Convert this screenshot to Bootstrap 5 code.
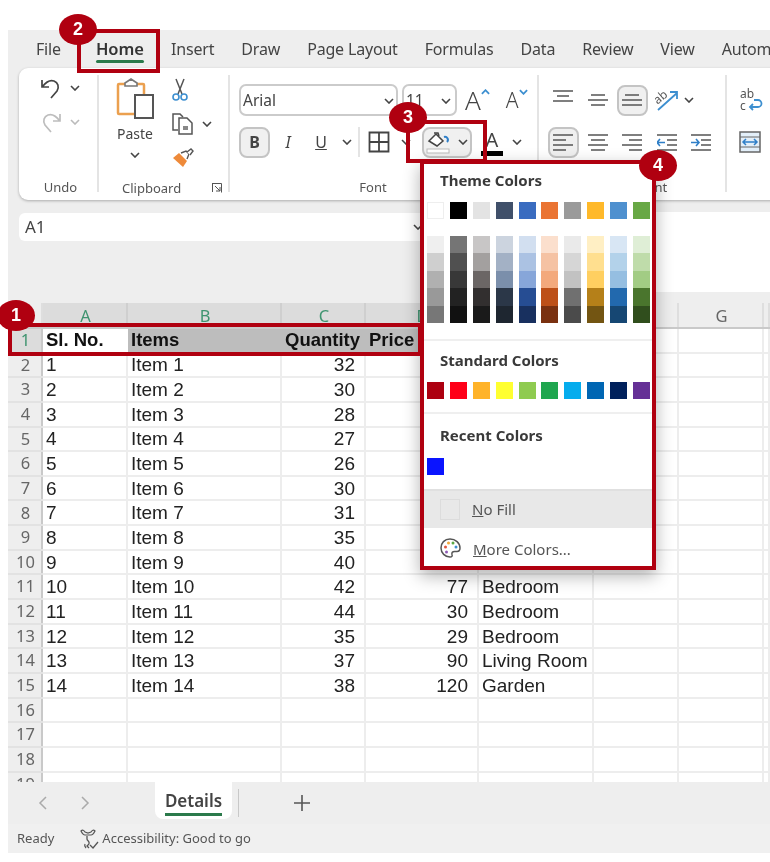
<!DOCTYPE html>
<html lang="en">
<head>
<meta charset="utf-8">
<title>Excel fill colour</title>
<link href="https://cdn.jsdelivr.net/npm/bootstrap@5.3.0/dist/css/bootstrap.min.css" rel="stylesheet">
<style>
html,body{margin:0;background:#fff;width:770px;height:862px;overflow:hidden}
.stage{position:relative;width:770px;height:862px;overflow:hidden;font-family:"Noto Sans","Open Sans",sans-serif;filter:blur(.45px)}
.app{margin:30px 0 0 8px;width:762px;height:823px;background:#eeeeee;overflow:hidden}
svg{display:block;flex:none}
.tabsbar{height:38px;padding-left:28px;gap:27px;font-size:16px;letter-spacing:-.18px;color:#444;flex:none}
.tabsbar>span{white-space:nowrap;line-height:38px;height:38px}
.tabsbar>.tab-on{position:relative;font-weight:600;font-size:16.5px;letter-spacing:0;color:#333;margin-left:8px}
.tab-on::after{content:"";position:absolute;left:0;right:0;bottom:5px;height:3px;background:#2b7a4b;border-radius:2px}
.ribbon{height:132px;margin-left:11px;width:790px;background:#fff;border-radius:9px;box-shadow:0 1px 3px rgba(0,0,0,.28);flex:none}
.rgroup{position:relative;flex:none;display:flex;flex-direction:column}
.rgroup+.rgroup::before{content:"";position:absolute;left:0;top:7px;bottom:8px;width:2px;background:#e4e4e4}
.rlabel{margin-top:auto;height:26px;line-height:26px;font-size:13px;color:#555;text-align:center;white-space:nowrap}
.g-undo{width:78px;padding-top:3px;padding-left:21px}
.g-clip{width:131px}
.g-font{width:309px;padding:16px 0 0 11px}
.g-align{width:188px;padding-left:9px;padding-top:16px}
.g-wrap{width:80px;padding:16px 0 0 14px}
.cell34{height:34px}
.frow{height:32px;margin-bottom:10px}
.sel-box{height:32px;background:#fff;border:2px solid #cbcbcb;border-radius:7px;font-size:15.500px;color:#444;padding:1px 2px 0 2px}
.sel-font{width:159px;margin-right:4px}
.sel-size{width:55px;padding-right:4px}
.ico-box{display:flex;align-items:center;justify-content:center;flex:none;height:32px}
.on-btn{background:#f0f0f0;border:2px solid #c4c4c4;border-radius:8px}
.paste-col{width:68px;padding-top:9px;padding-left:8px;font-size:14px;color:#444}
.tools-col{padding-left:7px;padding-top:5px}
.bigA{font-family:"Noto Sans",sans-serif;color:#444;line-height:1}
.fbox{height:103px;padding-top:12px;flex:none}
.namebox{margin:1px 0 0 11px;width:410px;height:28px;background:#fff;border-radius:6px;font-size:17px;color:#444;padding:0 6px;flex:none}
.namebar-r{margin-left:20px;flex:1;height:80px;background:#fff;border-radius:6px 0 0 6px}
.gridwrap{height:479px;overflow:hidden;background:#fff;flex:none}
.xl{table-layout:fixed;width:762px;border-collapse:collapse;font-family:"Liberation Sans",Arial,sans-serif;font-size:19px;color:#222}
.xl tr{height:24.650px}
.xl tr.hd{height:25px}
.xl td{padding:0 9px 0 3px;border-right:2px solid #ededed;border-bottom:2px solid #ededed;line-height:1;white-space:nowrap;overflow:hidden}
.xl th{font-family:"Noto Sans",sans-serif;font-weight:400;font-size:16.500px;color:#666;text-align:center;background:#eeeeee;border-right:2px solid #c9c9c9;border-bottom:2px solid #e2e2e2;padding:0 0 0 2px;line-height:1;overflow:hidden}
.xl .hd th{border-right:2px solid #dedede;border-bottom:2px solid #c9c9c9;padding-top:2px}
.xl .hd th.act,.xl th.act{background:#dcdcdc;color:#3f9470}
.xl .hd th.act{border-right-color:#cfcfcf}
.xl td.num{text-align:right}
.xl tr.r1 td{font-weight:700;font-size:18.500px;background:#bdbdbd;color:#111;border-bottom:2px solid #2b7a4b;border-right-color:#bdbdbd}
.xl tr.r1 td.cur{background:#fff;border-left:2px solid #2b7a4b;border-right-color:#fff}
.xl tr.r1 td.plain{background:#fff;font-weight:400;border-bottom-color:#ededed;border-right-color:#ededed}
.c0{width:34px}.c1{width:85px}.c2{width:154px}.c3{width:84px}.c4{width:113px}.c5{width:115px}.c6{width:85px}.c7{width:85px}
.sheetbar{height:42px;flex:none;color:#8a8a8a}
.nav-arrows{gap:34px;padding-left:30px}
.sheettab{position:relative;width:77px;height:37px;margin-left:65px;background:#fff;border-radius:0 0 8px 8px;font-weight:600;font-size:17px;color:#444;text-align:center;line-height:37px}
.sheettab::after{content:"";position:absolute;left:10px;right:10px;bottom:3px;height:3px;background:#2b7a4b}
.vsep{width:1px;height:28px;background:#c8c8c8;margin-left:6px}
.plus-add{margin-left:55px}
.statusbar{height:29px;flex:none;background:#f0f0f0;font-size:13px;color:#555;padding-left:9px}
.a11y{margin-left:25px;margin-right:3px}
.w31{width:31px;height:31px}.w36{width:36px}.w30{width:30px}.w22{width:22px}.w22b{width:22px;margin-left:8px}.w32{width:32px}.w50{width:50px;height:31px}.w40{width:40px}.w345{width:34.500px}
.al-mid,.al-l{margin:0 1.750px}
.sep2{display:block;width:2px;height:30px;background:#e4e4e4}
.fcolor{padding-top:2px}
.fc-bar{display:block;width:22px;height:5px;background:#000;margin-top:1px}
.fontlbl{padding-right:30px}
.cliplbl{padding-left:25px}
.clip-launch{margin-left:31px}
.cap-a{font-size:26px;font-weight:300}
.cap-b{font-size:21px;font-weight:300}
/* callouts */
.redbox{position:absolute;border:4px solid #b00010;pointer-events:none}
.rb-home{left:77px;top:29px;width:83px;height:44px}
.rb-row{left:8px;top:323px;width:414px;height:33px}
.rb-fill{left:406px;top:120px;width:81px;height:43px}
.pin{position:absolute;width:38px;height:31px;border-radius:50%;background:#b00010;color:#fff;font:700 18px/31px "Liberation Sans",Arial,sans-serif;text-align:center}
.pin1{left:-3px;top:300px}
.pin2{left:59px;top:14px}
.pin3{left:389px;top:102px}
.pin4{left:639px;top:150px}
.menu-pop{position:absolute;left:420px;top:160px;width:236px;height:410px;background:#fff;border:4px solid #b00010;box-shadow:0 6px 16px rgba(0,0,0,.3);font-size:14px;color:#444;display:flex;flex-direction:column}
.pop-title{font-weight:700;font-size:15px;color:#3a3a3a;padding-left:16px;line-height:20px;white-space:nowrap}
.swrow{display:flex;gap:5.900px;padding-left:3px}
.swrow>i{display:block;width:17px;height:17px;flex:none}
.shades>span{display:block;width:17px;flex:none}
.shades i{display:block;height:17.400px}
.pop-sep{height:2px;background:#efefef;flex:none}
.pop-item{padding-left:16px;font-size:15px;color:#555;gap:12px;flex:none}
.nofill{height:39px;background:#e8e8e8;border-top:2px solid #e0e0e0}
.nf-box{width:20px;height:21px;border:1px solid #dcdcdc;flex:none}
.more{height:38px;padding-top:4px}
.mt-t1{margin-top:6px}
.mt-s1{margin-top:12px}
.mt-s2{margin-top:17px}
.mt-s3{margin-top:16px}
.mt-t2{margin-top:9px}
.mt-s4{margin-top:12px}
.mt-s5{margin-top:13px}
.mt-t3{margin-top:11px}
.mt-s6{margin-top:13px}
.mt-s7{margin-top:14px}
</style>
</head>
<body>
<svg width="0" height="0" class="position-absolute">
  <symbol id="chev" viewBox="0 0 10 6"><path d="M1 1l4 4 4-4" fill="none" stroke="#444" stroke-width="1.600"/></symbol>
  <symbol id="chevl" viewBox="0 0 10 6"><path d="M1 1l4 4 4-4" fill="none" stroke="#bbb" stroke-width="1.600"/></symbol>
</svg>
<div class="stage">
<div class="app d-flex flex-column">

  <div class="tabsbar d-flex">
    <span>File</span><span class="tab-on">Home</span><span>Insert</span><span>Draw</span><span>Page Layout</span><span>Formulas</span><span>Data</span><span>Review</span><span>View</span><span>Automate</span>
  </div>

  <div class="ribbon d-flex">
    <div class="rgroup g-undo">
      <div class="d-flex align-items-center cell34">
        <svg width="22" height="24" viewBox="0 0 22 24"><path d="M2 4v7h7M2.500 10.500C6 6 10 3.500 14 5c4 1.500 5.500 6 3 10l-6 7" fill="none" stroke="#444" stroke-width="1.700"/></svg>
        <svg class="ms-2" width="10" height="6"><use href="#chev"/></svg>
      </div>
      <div class="d-flex align-items-center cell34">
        <svg width="22" height="24" viewBox="0 0 22 24"><path d="M20 4v7h-7M19.500 10.500C16 6 12 3.500 8 5c-4 1.500-5.500 6-3 10l6 7" fill="none" stroke="#bdbdbd" stroke-width="1.700"/></svg>
        <svg class="ms-2" width="10" height="6"><use href="#chevl"/></svg>
      </div>
      <div class="rlabel pe-3">Undo</div>
    </div>

    <div class="rgroup g-clip">
      <div class="d-flex">
        <div class="paste-col d-flex flex-column align-items-center">
          <svg width="38" height="42" viewBox="0 0 38 42"><path d="M3 7h24a1 1 0 0 1 1 1v28a1 1 0 0 1-1 1H3a1 1 0 0 1-1-1V8a1 1 0 0 1 1-1z" fill="#fff" stroke="#eba04f" stroke-width="2.500"/><path d="M9 9V6l6-4 6 4v3z" fill="#fff" stroke="#777" stroke-width="1.600"/><rect x="19" y="18" width="18" height="23" fill="#fff" stroke="#555" stroke-width="2"/></svg>
          <div class="mt-1">Paste</div>
          <svg class="mt-2" width="10" height="6"><use href="#chev"/></svg>
        </div>
        <div class="tools-col">
          <div class="d-flex align-items-center cell34">
            <svg width="16" height="24" viewBox="0 0 16 24"><path d="M4 1l6 15M12 1L6 16" stroke="#555" stroke-width="1.500" fill="none"/><circle cx="4" cy="19" r="3" fill="none" stroke="#3d8fd0" stroke-width="1.600"/><circle cx="12" cy="19" r="3" fill="none" stroke="#3d8fd0" stroke-width="1.600"/></svg>
          </div>
          <div class="d-flex align-items-center cell34">
            <svg width="22" height="22" viewBox="0 0 22 22"><path d="M6 17H1V1h7l3 3" fill="#fff" stroke="#555" stroke-width="1.500"/><path d="M7 5h8l5 5v11H7z" fill="#fff" stroke="#555" stroke-width="1.500"/><path d="M11 13h5v4h-5z" fill="#888"/></svg>
            <svg class="ms-2" width="10" height="6"><use href="#chev"/></svg>
          </div>
          <div class="d-flex align-items-center cell34">
            <svg width="22" height="20" viewBox="0 0 22 20"><path d="M1 10l6-5 8 8-4 6z" fill="#ee8a3a"/><path d="M9 5l5-2 3 3-2 5" fill="#fff" stroke="#555" stroke-width="1.400"/><path d="M15 4l4-3 2 2-3 4" fill="#fff" stroke="#555" stroke-width="1.400"/></svg>
          </div>
        </div>
      </div>
      <div class="rlabel d-flex align-items-center cliplbl"><span>Clipboard</span>
        <svg class="clip-launch" width="10" height="10" viewBox="0 0 10 10"><path d="M0 .5h9.500V9.500M.5 0v9M3 3l5 5M8 4v4H4" fill="none" stroke="#555"/></svg></div>
    </div>

    <div class="rgroup g-font">
      <div class="d-flex align-items-center frow">
        <div class="sel-box sel-font d-flex align-items-center justify-content-between"><span>Arial</span><svg width="10" height="6"><use href="#chev"/></svg></div>
        <div class="sel-box sel-size d-flex align-items-center justify-content-between"><span>11</span><svg width="10" height="6"><use href="#chev"/></svg></div>
        <div class="ico-box bigA cap-a ms-2">A<svg class="mb-3" width="9" height="6" viewBox="0 0 10 6"><path d="M1 5l4-4 4 4" fill="none" stroke="#3d8fd0" stroke-width="2"/></svg></div>
        <div class="ico-box bigA cap-b ms-3">A<svg class="mb-3" width="9" height="6" viewBox="0 0 10 6"><path d="M1 1l4 4 4-4" fill="none" stroke="#3d8fd0" stroke-width="2"/></svg></div>
      </div>
      <div class="d-flex align-items-center frow">
        <div class="ico-box on-btn fw-bold bigA w31">B</div>
        <div class="ico-box bigA fst-italic w36">I</div>
        <div class="ico-box bigA w30 text-decoration-underline">U</div>
        <div class="ico-box w22"><svg width="10" height="6"><use href="#chev"/></svg></div>
        <span class="sep2"></span>
        <div class="ico-box w22b"><svg width="22" height="22" viewBox="0 0 22 22"><path d="M1.500 1.500h19v19h-19zM11 1.500v19M1.500 11h19" fill="none" stroke="#444" stroke-width="1.800"/></svg></div>
        <div class="ico-box w32"><svg width="10" height="6"><use href="#chev"/></svg></div>
        <div class="ico-box on-btn w50 gap-2">
          <svg width="24" height="24" viewBox="0 0 24 24"><path d="M3 11l7-7 7 7-6 5z" fill="#fff" stroke="#444" stroke-width="1.500"/><path d="M8 3h4l1 3" fill="none" stroke="#444" stroke-width="1.500"/><path d="M18 7a3 3 0 0 1 3 5" fill="none" stroke="#2f7fc8" stroke-width="2"/><rect x="1" y="19" width="22" height="4" fill="#fff" stroke="#bbb"/></svg>
          <svg width="10" height="6"><use href="#chev"/></svg>
        </div>
        <div class="ico-box bigA w40 flex-column fs-5 fcolor">A<span class="fc-bar"></span></div>
        <div class="ico-box"><svg width="10" height="6"><use href="#chev"/></svg></div>
      </div>
      <div class="rlabel fontlbl">Font</div>
    </div>

    <div class="rgroup g-align">
      <div class="d-flex align-items-center frow">
        <div class="ico-box w345 pb-2"><svg width="20" height="12" viewBox="0 0 20 12"><path d="M0 1h20M4 6h12M0 11h20" stroke="#555" stroke-width="1.600"/></svg></div>
        <div class="ico-box w345"><svg width="20" height="12" viewBox="0 0 20 12"><path d="M3 1h14M0 6h20M3 11h14" stroke="#555" stroke-width="1.600"/></svg></div>
        <div class="ico-box on-btn w31 al-mid"><svg width="20" height="12" viewBox="0 0 20 12"><path d="M3 1h14M0 6h20M0 11h20" stroke="#555" stroke-width="1.600"/></svg></div>
        <div class="ico-box w345"><svg width="24" height="24" viewBox="0 0 24 24"><path d="M3 22L22 5M15 4h7v7" fill="none" stroke="#3d8fd0" stroke-width="1.800"/><text x="-1" y="13" font-size="12" fill="#555" transform="rotate(-40 6 10)">ab</text></svg></div>
        <div class="ico-box"><svg width="10" height="6"><use href="#chev"/></svg></div>
      </div>
      <div class="d-flex align-items-center frow">
        <div class="ico-box on-btn w31 al-l"><svg width="20" height="17" viewBox="0 0 20 17"><path d="M0 1h20M0 6h13M0 11h20M0 16h13" stroke="#555" stroke-width="1.600"/></svg></div>
        <div class="ico-box w345"><svg width="20" height="17" viewBox="0 0 20 17"><path d="M0 1h20M3 6h14M0 11h20M3 16h14" stroke="#555" stroke-width="1.600"/></svg></div>
        <div class="ico-box w345"><svg width="20" height="17" viewBox="0 0 20 17"><path d="M0 1h20M7 6h13M0 11h20M7 16h13" stroke="#555" stroke-width="1.600"/></svg></div>
        <div class="ico-box w345"><svg width="20" height="17" viewBox="0 0 20 17"><path d="M0 1h20M10 6h10M10 11h10M0 16h20" stroke="#555" stroke-width="1.600"/><path d="M0 8.500h8M3 5l-3 3.500 3 3.500" fill="none" stroke="#2f7fc8" stroke-width="1.600"/></svg></div>
        <div class="ico-box w345"><svg width="20" height="17" viewBox="0 0 20 17"><path d="M0 1h20M10 6h10M10 11h10M0 16h20" stroke="#555" stroke-width="1.600"/><path d="M0 8.500h8M5 5l3 3.500-3 3.500" fill="none" stroke="#2f7fc8" stroke-width="1.600"/></svg></div>
      </div>
      <div class="rlabel">Alignment</div>
    </div>

    <div class="rgroup g-wrap">
      <div class="frow d-flex align-items-center">
        <svg width="24" height="24" viewBox="0 0 24 24"><text x="1" y="10" font-size="12" fill="#555" font-family="Noto Sans">ab</text><text x="1" y="22" font-size="12" fill="#555" font-family="Noto Sans">c</text><path d="M15 12h4a3 3 0 0 1 0 7h-8M14 16l-3 3 3 3" fill="none" stroke="#3d8fd0" stroke-width="1.800"/></svg>
      </div>
      <div class="frow d-flex align-items-center">
        <svg width="22" height="22" viewBox="0 0 22 22"><rect x="1" y="1" width="20" height="20" fill="#e3eff9" stroke="#666" stroke-width="1.500"/><path d="M1 6h20M1 16h20" stroke="#666"/><path d="M4 11h14M7 8l-3 3 3 3M15 8l3 3-3 3" fill="none" stroke="#2f7fc8" stroke-width="1.500"/></svg>
      </div>
    </div>
  </div>

  <div class="fbox d-flex align-items-start">
    <div class="namebox d-flex align-items-center justify-content-between"><span>A1</span><svg width="10" height="6"><use href="#chev"/></svg></div>
    <div class="namebar-r"></div>
  </div>

  <div class="gridwrap">
    <table class="xl">
      <colgroup><col class="c0"><col class="c1"><col class="c2"><col class="c3"><col class="c4"><col class="c5"><col class="c6"><col class="c7"><col></colgroup>
      <tr class="hd"><th></th><th class="act">A</th><th class="act">B</th><th class="act">C</th><th class="act">D</th><th>E</th><th>F</th><th>G</th><th></th></tr>
      <tr class="r1"><th class="act">1</th><td class="cur">Sl. No.</td><td>Items</td><td class="num">Quantity</td><td>Price</td><td></td><td class="plain"></td><td class="plain"></td><td class="plain"></td></tr>
      <tr><th>2</th><td>1</td><td>Item 1</td><td class="num">32</td><td></td><td></td><td></td><td></td><td></td></tr>
      <tr><th>3</th><td>2</td><td>Item 2</td><td class="num">30</td><td></td><td></td><td></td><td></td><td></td></tr>
      <tr><th>4</th><td>3</td><td>Item 3</td><td class="num">28</td><td></td><td></td><td></td><td></td><td></td></tr>
      <tr><th>5</th><td>4</td><td>Item 4</td><td class="num">27</td><td></td><td></td><td></td><td></td><td></td></tr>
      <tr><th>6</th><td>5</td><td>Item 5</td><td class="num">26</td><td></td><td></td><td></td><td></td><td></td></tr>
      <tr><th>7</th><td>6</td><td>Item 6</td><td class="num">30</td><td></td><td></td><td></td><td></td><td></td></tr>
      <tr><th>8</th><td>7</td><td>Item 7</td><td class="num">31</td><td></td><td></td><td></td><td></td><td></td></tr>
      <tr><th>9</th><td>8</td><td>Item 8</td><td class="num">35</td><td></td><td></td><td></td><td></td><td></td></tr>
      <tr><th>10</th><td>9</td><td>Item 9</td><td class="num">40</td><td></td><td></td><td></td><td></td><td></td></tr>
      <tr><th>11</th><td>10</td><td>Item 10</td><td class="num">42</td><td class="num">77</td><td>Bedroom</td><td></td><td></td><td></td></tr>
      <tr><th>12</th><td>11</td><td>Item 11</td><td class="num">44</td><td class="num">30</td><td>Bedroom</td><td></td><td></td><td></td></tr>
      <tr><th>13</th><td>12</td><td>Item 12</td><td class="num">35</td><td class="num">29</td><td>Bedroom</td><td></td><td></td><td></td></tr>
      <tr><th>14</th><td>13</td><td>Item 13</td><td class="num">37</td><td class="num">90</td><td>Living Room</td><td></td><td></td><td></td></tr>
      <tr><th>15</th><td>14</td><td>Item 14</td><td class="num">38</td><td class="num">120</td><td>Garden</td><td></td><td></td><td></td></tr>
      <tr><th>16</th><td></td><td></td><td></td><td></td><td></td><td></td><td></td><td></td></tr>
      <tr><th>17</th><td></td><td></td><td></td><td></td><td></td><td></td><td></td><td></td></tr>
      <tr><th>18</th><td></td><td></td><td></td><td></td><td></td><td></td><td></td><td></td></tr>
      <tr><th>19</th><td></td><td></td><td></td><td></td><td></td><td></td><td></td><td></td></tr>
    </table>
  </div>

  <div class="sheetbar d-flex">
    <div class="d-flex align-items-center nav-arrows">
      <svg width="9" height="14" viewBox="0 0 9 14"><path d="M8 1L2 7l6 6" fill="none" stroke="#aaa" stroke-width="1.500"/></svg>
      <svg width="9" height="14" viewBox="0 0 9 14"><path d="M1 1l6 6-6 6" fill="none" stroke="#aaa" stroke-width="1.500"/></svg>
    </div>
    <div class="sheettab">Details</div>
    <div class="d-flex align-items-center"><span class="vsep"></span></div>
    <div class="d-flex align-items-center plus-add">
      <svg width="16" height="16" viewBox="0 0 16 16"><path d="M8 0v16M0 8h16" stroke="#555" stroke-width="1.600"/></svg>
    </div>
  </div>

  <div class="statusbar d-flex align-items-center">
    <span>Ready</span>
    <svg class="a11y" width="20" height="22" viewBox="0 0 20 22"><path d="M2 3c2-2 3 0 4 1l3 1 3-1c1-1 2-3 4-1-1 2-2 4-4 4H6C4 7 3 5 2 3z" fill="none" stroke="#555" stroke-width="1.200"/><path d="M8 8v3c0 2 3 2 2 5l-2 2 2 2M6 16c-1 2 0 3 1 4M11 17l3 3 5-6" fill="none" stroke="#555" stroke-width="1.300"/></svg>
    <span>Accessibility: Good to go</span>
  </div>
</div>

<!-- colour menu -->
<div class="menu-pop">
  <div class="pop-title mt-t1">Theme Colors</div>
  <div class="swrow mt-s1">
    <i style="background:#fff;box-shadow:inset 0 0 0 1px #eee"></i><i style="background:#000"></i><i style="background:#e3e3e3"></i><i style="background:#40506a"></i><i style="background:#3a6cc0"></i><i style="background:#ea7433"></i><i style="background:#9a9a9a"></i><i style="background:#ffb92a"></i><i style="background:#4e90cf"></i><i style="background:#68a845"></i>
  </div>
  <div class="swrow shades mt-s2">
    <span><i style="background:#efefef"></i><i style="background:#cfcfcf"></i><i style="background:#b0b0b0"></i><i style="background:#999"></i><i style="background:#777"></i></span>
    <span><i style="background:#757575"></i><i style="background:#505050"></i><i style="background:#383838"></i><i style="background:#222"></i><i style="background:#111"></i></span>
    <span><i style="background:#c8c6c6"></i><i style="background:#a3a09f"></i><i style="background:#6b6665"></i><i style="background:#322f2f"></i><i style="background:#1a1a1a"></i></span>
    <span><i style="background:#ccd4df"></i><i style="background:#a3b1c5"></i><i style="background:#7b8fab"></i><i style="background:#2b3748"></i><i style="background:#1e2630"></i></span>
    <span><i style="background:#d2dff0"></i><i style="background:#abc2e3"></i><i style="background:#87a6d9"></i><i style="background:#264d93"></i><i style="background:#18305f"></i></span>
    <span><i style="background:#fbdfcd"></i><i style="background:#f5c2a3"></i><i style="background:#f3a97c"></i><i style="background:#bd5018"></i><i style="background:#7a3110"></i></span>
    <span><i style="background:#eaeaea"></i><i style="background:#d6d6d6"></i><i style="background:#c2c2c2"></i><i style="background:#707070"></i><i style="background:#4b4b4b"></i></span>
    <span><i style="background:#ffefc4"></i><i style="background:#ffdf8f"></i><i style="background:#ffcf60"></i><i style="background:#b58019"></i><i style="background:#735512"></i></span>
    <span><i style="background:#d8e6f4"></i><i style="background:#b3d2ea"></i><i style="background:#95bee1"></i><i style="background:#2269ae"></i><i style="background:#164773"></i></span>
    <span><i style="background:#dfeed6"></i><i style="background:#bfdcaa"></i><i style="background:#a2cc84"></i><i style="background:#4a752d"></i><i style="background:#304e1d"></i></span>
  </div>
  <div class="pop-sep mt-s3"></div>
  <div class="pop-title mt-t2">Standard Colors</div>
  <div class="swrow mt-s4">
    <i style="background:#ad0010"></i><i style="background:#ff0018"></i><i style="background:#ffb329"></i><i style="background:#ffff30"></i><i style="background:#8fcb50"></i><i style="background:#1fa64f"></i><i style="background:#05aced"></i><i style="background:#0066b3"></i><i style="background:#00215c"></i><i style="background:#653096"></i>
  </div>
  <div class="pop-sep mt-s5"></div>
  <div class="pop-title mt-t3">Recent Colors</div>
  <div class="swrow mt-s6"><i style="background:#0a14ff"></i></div>
  <div class="pop-item nofill d-flex align-items-center mt-s7"><span class="nf-box"></span><span><u>N</u>o Fill</span></div>
  <div class="pop-item more d-flex align-items-center">
    <svg width="21" height="21" viewBox="0 0 21 21"><path d="M10 1C4.500 1 1 5 1 10c0 5 4 9 9 9 2 0 2.500-1 2-2.500-.5-2 .5-3 2.500-3H17c2 0 3-1.500 3-3.500 0-5-4.500-9-10-9z" fill="#fff" stroke="#555" stroke-width="1.500"/><circle cx="5.500" cy="9" r="1.500" fill="#e0583f"/><circle cx="8.500" cy="5" r="1.500" fill="#f2a93b"/><circle cx="13" cy="5" r="1.500" fill="#5aa846"/><circle cx="16" cy="9" r="1.500" fill="#3d8fd0"/><circle cx="6.500" cy="14" r="1.500" fill="#8f5bb5"/></svg>
    <span><u>M</u>ore Colors...</span>
  </div>
</div>

<div class="redbox rb-home"></div>
<div class="redbox rb-row"></div>
<div class="redbox rb-fill"></div>
<div class="pin pin1">1</div>
<div class="pin pin2">2</div>
<div class="pin pin3">3</div>
<div class="pin pin4">4</div>
</div>
</body>
</html>
